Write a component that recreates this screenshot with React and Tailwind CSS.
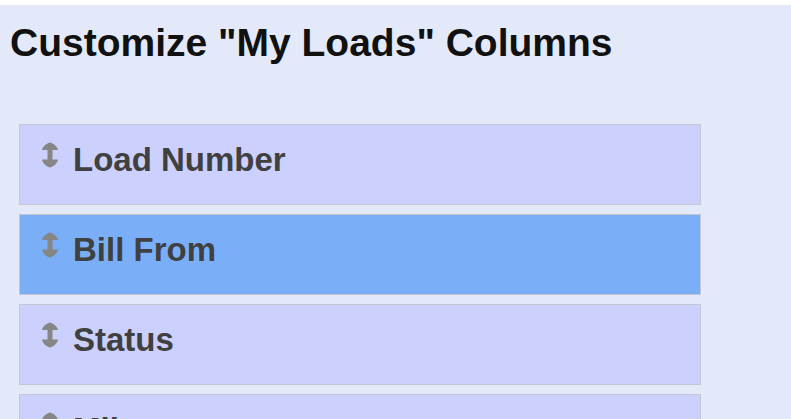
import React from "react";

function DragIcon() {
  return (
    <svg width="18" height="26" viewBox="0 0 18 26" className="shrink-0 blur-[0.5px]">
      <path
        d="M9 0.5 C13 1.5 16.5 5 17 8 L11.5 8 L11.5 17.5 L17 17.5 C16.5 21 13 24.5 9 25.5 C5 24.5 1.5 21 1 17.5 L6.5 17.5 L6.5 8 L1 8 C1.5 5 5 1.5 9 0.5 Z"
        fill="#868686"
      />
    </svg>
  );
}

const items = [
  { label: "Load Number", active: false },
  { label: "Bill From", active: true },
  { label: "Status", active: false },
  { label: "Miles", active: false },
];

export default function App() {
  return (
    <div
      className="w-[791px] h-[419px] overflow-hidden bg-[#e3e9f9] border-t-[5px] border-white"
      style={{ fontFamily: '"Liberation Sans", Arial, sans-serif' }}
    >
      <h1 className="mt-[15px] pl-[10px] text-[39px] font-bold text-[#111] leading-[45px]">
        Customize "My Loads" Columns
      </h1>
      <ul className="mt-[59px] ml-[19px] w-[682px] flex flex-col gap-[9px]">
        {items.map((it) => (
          <li
            key={it.label}
            className={`h-[81px] shrink-0 border border-[#c4c6d4] flex items-start pl-[21px] pt-[17px] gap-[14px] ${
              it.active ? "bg-[#7aaff8]" : "bg-[#ccd0fd]"
            }`}
          >
            <DragIcon />
            <span className="text-[33px] font-bold leading-[38px] text-[#404040] -mt-[1px]">
              {it.label}
            </span>
          </li>
        ))}
      </ul>
    </div>
  );
}
